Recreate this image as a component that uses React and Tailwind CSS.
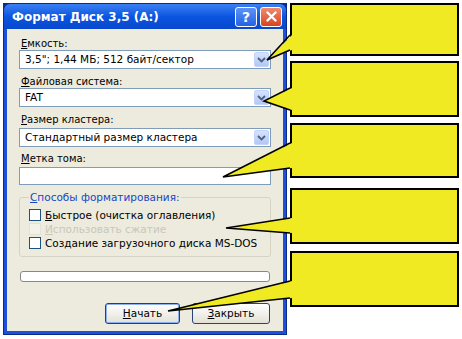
import React from 'react';

const font = "font-['DejaVu_Sans',sans-serif]";

const Chevron = () => (
    <svg width="9" height="6" viewBox="0 0 9 6">
        <path d="M1 1 L4.5 4.5 L8 1" fill="none" stroke="#4D6185" strokeWidth="1.8" />
    </svg>
);

const Combo = ({ value }) => (
    <div className="h-[19px] bg-white border border-[#7F9DB9] flex items-center">
        <span className="flex-1 pl-[5px] text-[10.5px] text-black leading-none whitespace-nowrap">{value}</span>
        <div className="w-[15px] h-[15px] mr-[1px] rounded-[2px] bg-linear-to-b from-[#D6E3FC] to-[#B2C8F3] border border-[#C3D3FD] flex items-center justify-center">
            <Chevron />
        </div>
    </div>
);

const Label = ({ first, rest }) => (
    <div className="h-[11px] text-[10px] leading-[11px] text-black pl-[2px] whitespace-nowrap">
        <span className="underline">{first}</span>{rest}
    </div>
);

const Check = ({ first, rest, disabled }) => (
    <div className="flex items-center gap-[4px] h-[14px]">
        <div className={disabled ? 'w-[12px] h-[12px] border border-[#E4E2D6] bg-[#F2F1EA]' : 'w-[12px] h-[12px] border border-[#1C5180] bg-white'} />
        <span className={disabled ? 'text-[10.5px] leading-none text-[#C9C7BA] whitespace-nowrap' : 'text-[10.5px] leading-none text-black whitespace-nowrap'}>
            <span className="underline">{first}</span>{rest}
        </span>
    </div>
);

const Callout = ({ className }) => (
    <div className={`w-[169px] border-2 border-black bg-[#EFEA22] ${className}`} />
);

export default function App() {
    return (
        <div className={`w-[462px] h-[339px] bg-white relative flex ${font}`}>
            {/* dialog */}
            <div className="ml-[3px] mt-[3px] w-[284px] h-[332px] bg-[#0A2A8C] p-[1px] flex flex-col">
                <div className="h-[25px] rounded-t-[6px] bg-linear-to-b from-[#3A80F3] via-[#0B55E0] to-[#0848CC] flex items-center pl-[8px] pr-[4px]">
                    <span className="flex-1 text-white font-bold text-[12px] leading-none whitespace-nowrap">Формат Диск 3,5 (А:)</span>
                    <div className="w-[22px] h-[20px] rounded-[3px] border border-white bg-linear-to-b from-[#5C93F7] to-[#2462E4] flex items-center justify-center text-white font-bold text-[14px] leading-none">?</div>
                    <div className="ml-[3px] w-[22px] h-[20px] rounded-[3px] border border-white bg-linear-to-b from-[#F08A6A] to-[#D8411C] flex items-center justify-center">
                        <svg width="11" height="11" viewBox="0 0 11 11">
                            <path d="M1.5 1.5 L9.5 9.5 M9.5 1.5 L1.5 9.5" stroke="white" strokeWidth="2.4" strokeLinecap="round" />
                        </svg>
                    </div>
                </div>
                <div className="flex-1 border-x-[3px] border-b-[3px] border-[#1E50D8] bg-[#EDEBDD] px-[12px] flex flex-col">
                    <div className="mt-[9px]"><Label first="Е" rest="мкость:" /></div>
                    <div className="mt-[1px]"><Combo value={'3,5";  1,44 МБ; 512 байт/сектор'} /></div>
                    <div className="mt-[7px]"><Label first="Ф" rest="айловая система:" /></div>
                    <div className="mt-[1px]"><Combo value="FAT" /></div>
                    <div className="mt-[7px]"><Label first="Р" rest="азмер кластера:" /></div>
                    <div className="mt-[3px]"><Combo value="Стандартный размер кластера" /></div>
                    <div className="mt-[6px]"><Label first="М" rest="етка тома:" /></div>
                    <div className="mt-[3px] h-[18px] bg-white border border-[#7F9DB9]" />
                    <fieldset className="mt-[7px] border border-[#D6D3C2] rounded-[3px] px-[9px] pb-[6px]">
                        <legend className="px-[1px] h-[11px] text-[10.5px] leading-[11px] text-[#1646C4] whitespace-nowrap">
                            <span className="underline">С</span>пособы форматирования:
                        </legend>
                        <div className="mt-[5px] flex flex-col">
                            <Check first="Б" rest="ыстрое (очистка оглавления)" />
                            <Check first="И" rest="спользовать сжатие" disabled />
                            <Check first="" rest="Создание загрузочного диска MS-DOS" />
                        </div>
                    </fieldset>
                    <div className="mt-[14px] h-[11px] mx-[1px] rounded-[3px] border border-[#8A8A84] bg-white" />
                    <div className="mt-[21px] flex justify-end gap-[12px] pr-[1px]">
                        <div className="w-[75px] h-[21px] rounded-[3px] border border-[#1A3F8F] bg-linear-to-b from-white to-[#E3E1D6] shadow-[inset_0_0_0_1px_#8EB1F0] flex items-center justify-center text-[10.5px] leading-none">
                            <span><span className="underline">Н</span>ачать</span>
                        </div>
                        <div className="w-[78px] h-[21px] rounded-[3px] border border-[#2A417A] bg-linear-to-b from-white to-[#E3E1D6] flex items-center justify-center text-[10.5px] leading-none">
                            <span><span className="underline">З</span>акрыть</span>
                        </div>
                    </div>
                </div>
            </div>

            {/* callout boxes */}
            <div className="ml-[3px] mt-[3px] flex flex-col">
                <Callout className="h-[53px]" />
                <Callout className="h-[56px] mt-[5px]" />
                <Callout className="h-[55px] mt-[6px]" />
                <Callout className="h-[56px] mt-[10px]" />
                <Callout className="h-[56px] mt-[7px]" />
            </div>

            {/* callout tails */}
            <svg className="absolute inset-0 pointer-events-none" width="462" height="339" viewBox="0 0 462 339">
                {[
                    [[292, 35], [292, 50], [267, 60]],
                    [[292, 88], [292, 110], [264, 101]],
                    [[292, 143], [292, 168], [223, 177]],
                    [[292, 218], [292, 233], [226, 228]],
                    [[292, 281], [292, 298], [168, 311]],
                ].map(([a, b, t], i) => (
                    <g key={i}>
                        <polygon points={`${a[0]},${a[1]} ${b[0]},${b[1]} ${t[0]},${t[1]}`} fill="#EFEA22" />
                        <path d={`M${a[0] - 2},${a[1]} L${t[0]},${t[1]} L${b[0] - 2},${b[1]}`} fill="none" stroke="black" strokeWidth="1.6" strokeLinejoin="miter" />
                    </g>
                ))}
            </svg>
        </div>
    );
}
